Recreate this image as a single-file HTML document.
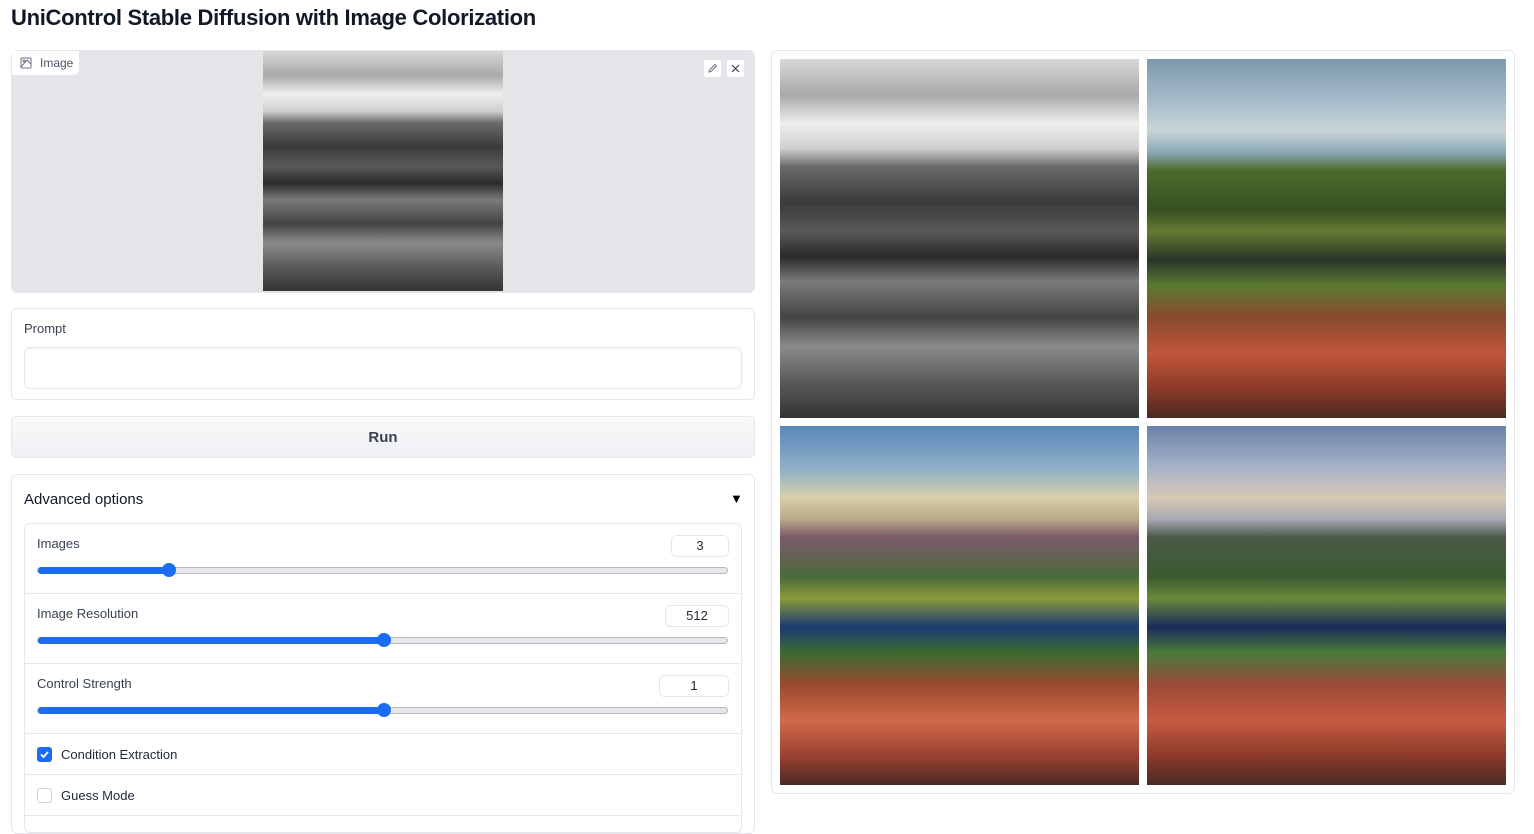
<!DOCTYPE html>
<html><head><meta charset="utf-8"><style>
*{box-sizing:border-box;margin:0;padding:0}
body{width:1534px;height:822px;overflow:hidden;background:#fff;font-family:"Liberation Sans",sans-serif;color:#1f2937;position:relative}
.a{position:absolute}
h1{position:absolute;left:11px;top:5px;font-size:22px;font-weight:700;color:#111827;letter-spacing:-0.3px}
.box{border:1px solid #e5e7eb;border-radius:6px;background:#fff}
.lbl{font-size:13px;color:#374151}
.num{position:absolute;height:22px;border:1px solid #e5e7eb;border-radius:6px;font-size:13px;text-align:center;line-height:20px;color:#1f2937}
.track{position:absolute;left:37px;width:691px;height:7px;border:1px solid #b5b8be;border-radius:4px;background:#e5e7eb}
.fill{position:absolute;left:0;top:-1px;height:7px;background:#1a6cf0;border-radius:4px}
.knob{position:absolute;width:14px;height:14px;border-radius:50%;background:#1a6cf0;top:-5px}
.sep{position:absolute;left:25px;width:716px;height:1px;background:#e5e7eb}
.gray{background:linear-gradient(180deg,#d8d8d8 0%,#a9a9a9 10%,#eee 18%,#cfcfcf 25%,#6a6a6a 30%,#3a3a3a 40%,#595959 48%,#2a2a2a 55%,#7a7a7a 62%,#444 72%,#8b8b8b 80%,#5a5a5a 90%,#333 100%)}
.c1{background:linear-gradient(180deg,#7d98ab 0%,#a6bccb 12%,#c9d4d6 20%,#8ba8b8 26%,#4d6a2d 31%,#365020 42%,#667a32 48%,#29352b 56%,#5a7a30 63%,#8a4a2e 72%,#c0553a 82%,#8a3a28 92%,#4a2a22 100%)}
.c2{background:linear-gradient(180deg,#5a86b8 0%,#8fb0c8 12%,#d8d0a8 20%,#b9a888 26%,#7a5a6a 31%,#4a6a3a 42%,#8a9a3a 48%,#1c3a72 56%,#3a6a30 63%,#9a4a30 72%,#d06a48 82%,#9a4030 92%,#4a2a26 100%)}
.c3{background:linear-gradient(180deg,#6a82a8 0%,#a8b4c8 12%,#d8c8b4 20%,#a8a8b4 26%,#4a5a48 31%,#3a5a30 42%,#6a8a3a 48%,#1a2a5a 56%,#4a7a3a 63%,#9a4a38 72%,#c85a40 82%,#8a3a2a 92%,#4a2a24 100%)}
</style></head><body>
<h1>UniControl Stable Diffusion with Image Colorization</h1>

<div class="a" style="left:11px;top:50px;width:744px;height:243px;background:#e4e5e9;border:1px solid #e5e7eb;border-radius:6px"></div>
<div class="a" style="left:12px;top:51px;width:67px;height:24px;background:#fff;border-radius:0 0 6px 0;font-size:12px;color:#4b5563;line-height:24px;padding-left:28px">Image</div>
<svg class="a" style="left:20px;top:57px" width="12" height="12" viewBox="0 0 12 12" fill="none" stroke="#6b7280" stroke-width="1"><rect x="1" y="1" width="10" height="10" rx="1"/><circle cx="4" cy="4" r="1"/><path d="M11 7L7 3L1 10"/></svg>
<div class="a gray" style="left:263px;top:51px;width:240px;height:240px"></div>
<div class="a" style="left:703px;top:59px;width:19px;height:19px;background:#fff;border:1px solid #e5e7eb;border-radius:3px"></div>
<svg class="a" style="left:707px;top:63px" width="11" height="11" viewBox="0 0 11 11" fill="none" stroke="#6b7280"><path d="M2 9L2.5 7L8 1.5L9.5 3L4 8.5Z"/></svg>
<div class="a" style="left:726px;top:59px;width:19px;height:19px;background:#fff;border:1px solid #e5e7eb;border-radius:3px"></div>
<svg class="a" style="left:731px;top:64px" width="9" height="9" viewBox="0 0 9 9" stroke="#374151" stroke-width="1.2"><path d="M1 1L8 8M8 1L1 8"/></svg>

<div class="a box" style="left:11px;top:308px;width:744px;height:92px"></div>
<div class="a lbl" style="left:24px;top:321px">Prompt</div>
<div class="a" style="left:24px;top:347px;width:718px;height:42px;border:1px solid #e5e7eb;border-radius:6px;box-shadow:inset 0 1px 2px rgba(0,0,0,.05)"></div>

<div class="a" style="left:11px;top:416px;width:744px;height:42px;border:1px solid #e5e7eb;border-radius:6px;background:linear-gradient(#f9fafb,#eef0f3);text-align:center;line-height:42px;font-size:15px;font-weight:700;color:#374151">Run</div>

<div class="a box" style="left:11px;top:474px;width:744px;height:360px"></div>
<div class="a" style="left:24px;top:491px;font-size:15px;color:#111827">Advanced options</div>
<div class="a" style="left:730px;top:491px;font-size:13px;color:#000">▼</div>
<div class="a" style="left:24px;top:523px;width:718px;height:310px;border:1px solid #e5e7eb;border-radius:6px"></div>

<div class="a lbl" style="left:37px;top:536px">Images</div>
<div class="num" style="left:671px;top:535px;width:58px">3</div>
<div class="track" style="top:567px"><div class="fill" style="width:131px"></div><div class="knob" style="left:124px"></div></div>
<div class="sep" style="top:593px"></div>

<div class="lbl a" style="left:37px;top:606px">Image Resolution</div>
<div class="num" style="left:665px;top:605px;width:64px">512</div>
<div class="track" style="top:637px"><div class="fill" style="width:346px"></div><div class="knob" style="left:339px"></div></div>
<div class="sep" style="top:663px"></div>

<div class="lbl a" style="left:37px;top:676px">Control Strength</div>
<div class="num" style="left:659px;top:675px;width:70px">1</div>
<div class="track" style="top:707px"><div class="fill" style="width:346px"></div><div class="knob" style="left:339px"></div></div>
<div class="sep" style="top:733px"></div>

<div class="a" style="left:37px;top:747px;width:15px;height:15px;background:#1a6cf0;border-radius:3px"></div>
<svg class="a" style="left:39px;top:749px" width="11" height="11" viewBox="0 0 11 11" fill="none" stroke="#fff" stroke-width="1.8"><path d="M2 5.5L4.5 8L9 3"/></svg>
<div class="a lbl" style="left:61px;top:747px;color:#1f2937">Condition Extraction</div>
<div class="sep" style="top:774px"></div>
<div class="a" style="left:37px;top:788px;width:15px;height:15px;border:1px solid #d1d5db;border-radius:3px"></div>
<div class="a lbl" style="left:61px;top:788px;color:#1f2937">Guess Mode</div>
<div class="sep" style="top:815px"></div>

<div class="a box" style="left:771px;top:50px;width:744px;height:744px"></div>
<div class="a gray" style="left:780px;top:59px;width:359px;height:359px"></div>
<div class="a c1" style="left:1147px;top:59px;width:359px;height:359px"></div>
<div class="a c2" style="left:780px;top:426px;width:359px;height:359px"></div>
<div class="a c3" style="left:1147px;top:426px;width:359px;height:359px"></div>
</body></html>
